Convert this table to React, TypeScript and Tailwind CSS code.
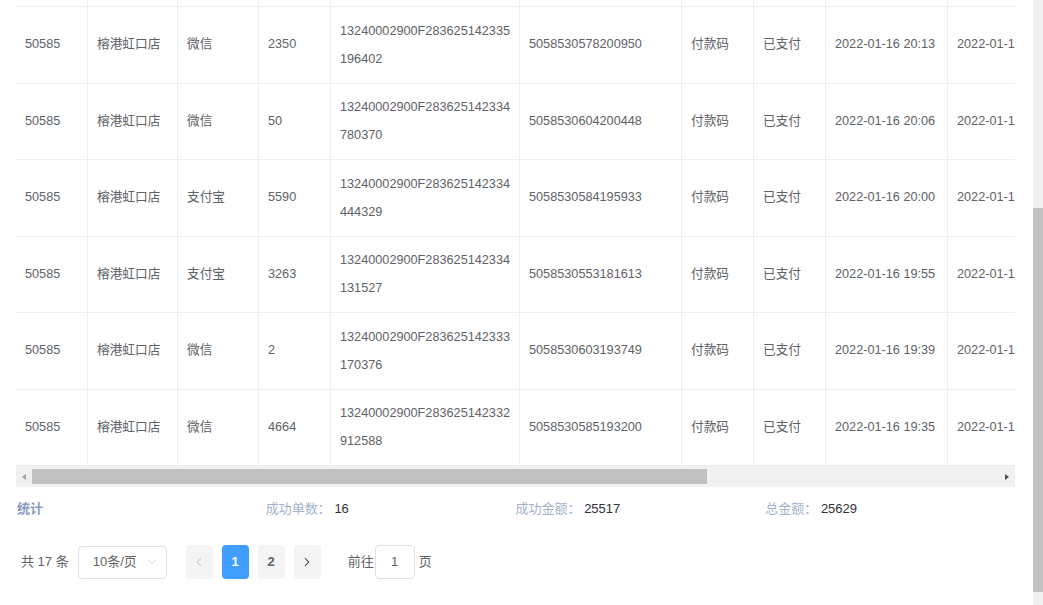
import { ChevronDown, ChevronLeft, ChevronRight } from 'lucide-react';

type Order = {
  shopId: string;
  shop: string;
  channel: string;
  amount: string;
  tradeNo: [string, string];
  outNo: string;
  payType: string;
  status: string;
  payTime: string;
};

const ORDERS: Order[] = [
  {
    shopId: '50585',
    shop: '榕港虹口店',
    channel: '微信',
    amount: '2350',
    tradeNo: ['13240002900F283625142335', '196402'],
    outNo: '5058530578200950',
    payType: '付款码',
    status: '已支付',
    payTime: '2022-01-16 20:13',
  },
  {
    shopId: '50585',
    shop: '榕港虹口店',
    channel: '微信',
    amount: '50',
    tradeNo: ['13240002900F283625142334', '780370'],
    outNo: '5058530604200448',
    payType: '付款码',
    status: '已支付',
    payTime: '2022-01-16 20:06',
  },
  {
    shopId: '50585',
    shop: '榕港虹口店',
    channel: '支付宝',
    amount: '5590',
    tradeNo: ['13240002900F283625142334', '444329'],
    outNo: '5058530584195933',
    payType: '付款码',
    status: '已支付',
    payTime: '2022-01-16 20:00',
  },
  {
    shopId: '50585',
    shop: '榕港虹口店',
    channel: '支付宝',
    amount: '3263',
    tradeNo: ['13240002900F283625142334', '131527'],
    outNo: '5058530553181613',
    payType: '付款码',
    status: '已支付',
    payTime: '2022-01-16 19:55',
  },
  {
    shopId: '50585',
    shop: '榕港虹口店',
    channel: '微信',
    amount: '2',
    tradeNo: ['13240002900F283625142333', '170376'],
    outNo: '5058530603193749',
    payType: '付款码',
    status: '已支付',
    payTime: '2022-01-16 19:39',
  },
  {
    shopId: '50585',
    shop: '榕港虹口店',
    channel: '微信',
    amount: '4664',
    tradeNo: ['13240002900F283625142332', '912588'],
    outNo: '5058530585193200',
    payType: '付款码',
    status: '已支付',
    payTime: '2022-01-16 19:35',
  },
];

function Cell({ w, children }: { w: string; children?: React.ReactNode }) {
  return (
    <div
      className={`${w} shrink-0 flex items-center border-r border-[#ebeef5] pl-[9px] pr-2 whitespace-nowrap`}
    >
      {children}
    </div>
  );
}

function Row({ order }: { order?: Order }) {
  return (
    <div
      className={`flex border-b border-[#ebeef5] ${order ? 'h-[76.5px]' : 'h-[7px]'}`}
    >
      <Cell w="w-[72px]">{order?.shopId}</Cell>
      <Cell w="w-[90px]">{order?.shop}</Cell>
      <Cell w="w-[81px]">{order?.channel}</Cell>
      <Cell w="w-[72px]">{order?.amount}</Cell>
      <Cell w="w-[189px]">
        {order && (
          <div className="leading-[28px]">
            {order.tradeNo[0]}
            <br />
            {order.tradeNo[1]}
          </div>
        )}
      </Cell>
      <Cell w="w-[162px]">{order?.outNo}</Cell>
      <Cell w="w-[72px]">{order?.payType}</Cell>
      <Cell w="w-[72px]">{order?.status}</Cell>
      <Cell w="w-[122px]">{order?.payTime}</Cell>
      <Cell w="w-[122px]">{order?.payTime}</Cell>
    </div>
  );
}

export default function App() {
  return (
    <div
      className="flex h-[605px] w-[1043px] overflow-hidden bg-white text-[12.7px] text-[#606266]"
      style={{ fontFamily: '"Liberation Sans", "Noto Sans CJK SC", sans-serif' }}
    >
      <div className="w-[1033px] shrink-0 pl-4 pr-[18px]">
        {/* Table body, scrolled */}
        <div className="w-[999px] overflow-hidden">
          <Row />
          {ORDERS.map((o, i) => (
            <Row key={i} order={o} />
          ))}
        </div>

        {/* Horizontal scrollbar */}
        <div className="flex h-[21px] w-[999px] items-center bg-[#f1f1f1]">
          <div className="flex w-4 shrink-0 justify-center">
            <div className="h-0 w-0 border-y-[3.5px] border-r-[4px] border-y-transparent border-r-[#a3a3a3]" />
          </div>
          <div className="h-[15px] w-[675px] bg-[#c1c1c1]" />
          <div className="flex-1" />
          <div className="flex w-4 shrink-0 justify-center">
            <div className="h-0 w-0 border-y-[3.5px] border-l-[4px] border-y-transparent border-l-[#505050]" />
          </div>
        </div>

        {/* Summary */}
        <div className="grid h-[44px] w-[999px] grid-cols-4 items-center text-[13px]">
          <div className="pl-px font-semibold text-[#8a9bbd]">统计</div>
          <div>
            <span className="text-[#a3b1cc]">成功单数： </span>
            <span className="text-[#303133]">16</span>
          </div>
          <div>
            <span className="text-[#a3b1cc]">成功金额： </span>
            <span className="text-[#303133]">25517</span>
          </div>
          <div>
            <span className="text-[#a3b1cc]">总金额： </span>
            <span className="text-[#303133]">25629</span>
          </div>
        </div>

        {/* Pagination */}
        <div className="mt-[14px] flex h-[34px] items-center text-[13px] text-[#606266]">
          <span className="ml-[5px]">共 17 条</span>
          <div className="ml-[9px] flex h-[33px] w-[89px] items-center justify-between rounded border border-[#dcdfe6] pl-[14px] pr-[8px]">
            <span>10条/页</span>
            <ChevronDown className="h-3 w-3 text-[#c0c4cc]" strokeWidth={1.5} />
          </div>
          <div className="ml-[19px] flex gap-[9px]">
            <div className="flex h-[34px] w-[27px] items-center justify-center rounded-sm bg-[#f4f4f5] text-[#c0c4cc]">
              <ChevronLeft className="h-3.5 w-3.5" strokeWidth={1.8} />
            </div>
            <div className="flex h-[34px] w-[27px] items-center justify-center rounded-sm bg-[#409eff] font-bold text-white">
              1
            </div>
            <div className="flex h-[34px] w-[27px] items-center justify-center rounded-sm bg-[#f4f4f5] font-bold text-[#606266]">
              2
            </div>
            <div className="flex h-[34px] w-[27px] items-center justify-center rounded-sm bg-[#f4f4f5] text-[#303133]">
              <ChevronRight className="h-3.5 w-3.5" strokeWidth={1.8} />
            </div>
          </div>
          <span className="ml-[27px]">前往</span>
          <div className="ml-px flex h-[34px] w-[40px] items-center justify-center rounded border border-[#dcdfe6] text-[#606266]">
            1
          </div>
          <span className="ml-[4px]">页</span>
        </div>
      </div>

      {/* Page scrollbar */}
      <div className="flex w-[10px] shrink-0 flex-col bg-[#f1f1f1]">
        <div className="h-[208px]" />
        <div className="h-[384px] bg-[#c1c1c1]" />
        <div className="flex-1" />
      </div>
    </div>
  );
}
